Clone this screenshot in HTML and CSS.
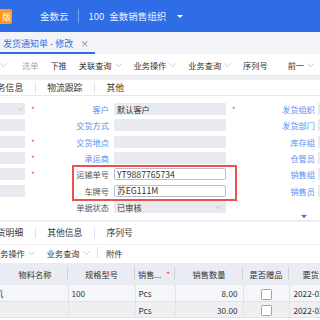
FILE: index.html
```html
<!DOCTYPE html>
<html>
<head>
<meta charset="utf-8">
<title>发货通知单 - 修改</title>
<link rel="stylesheet" href="styles.css">
</head>
<body>
<div class="topbar">
	<span class="badge">版</span>
	<span class="brand">金数云</span>
	<span class="vsep"></span>
	<span>100</span>
	<span class="org-name">金数销售组织</span>
	<span class="caret"></span>
</div>
<div class="tabstrip">
	<div class="doc-tab">发货通知单 - 修改<span class="close">×</span></div>
</div>
<div class="toolbar">
	<span class="tool"><svg class="chev" viewBox="0 0 7 4"><polyline points="0.5,0.5 3.5,3.5 6.5,0.5"/></svg></span>
	<span class="tsep"></span>
	<span class="tool disabled">选单</span>
	<span class="tool">下推</span>
	<span class="tool">关联查询<svg class="chev" viewBox="0 0 7 4"><polyline points="0.5,0.5 3.5,3.5 6.5,0.5"/></svg></span>
	<span class="tool">业务操作<svg class="chev" viewBox="0 0 7 4"><polyline points="0.5,0.5 3.5,3.5 6.5,0.5"/></svg></span>
	<span class="tool">业务查询<svg class="chev" viewBox="0 0 7 4"><polyline points="0.5,0.5 3.5,3.5 6.5,0.5"/></svg></span>
	<span class="tool">序列号</span>
	<span class="tsep"></span>
	<span class="tool">前一<svg class="chev" viewBox="0 0 7 4"><polyline points="0.5,0.5 3.5,3.5 6.5,0.5"/></svg></span>
</div>

<div class="panel">
	<div class="tabs">
		<span class="tab tab-cut">业务信息</span>
		<span class="tab-sep"></span>
		<span class="tab">物流跟踪</span>
		<span class="tab-sep"></span>
		<span class="tab">其他</span>
	</div>
	<div class="form">
		<!-- 第1行 -->
		<span class="in in-sel"><svg class="chev" viewBox="0 0 7 4"><polyline points="0.5,0.5 3.5,3.5 6.5,0.5"/></svg></span>
		<span class="req">*</span>
		<span class="lbl">客户</span>
		<span class="in">默认客户</span>
		<span class="req">*</span>
		<span class="lbl lbl-r">发货组织</span>
		<span class="in"></span>
		<!-- 第2行 -->
		<span class="in"></span>
		<span></span>
		<span class="lbl">交货方式</span>
		<span class="in"></span>
		<span></span>
		<span class="lbl lbl-r">发货部门</span>
		<span class="in"></span>
		<!-- 第3行 -->
		<span class="in"></span>
		<span class="req">*</span>
		<span class="lbl">交货地点</span>
		<span class="in"></span>
		<span></span>
		<span class="lbl lbl-r">库存组</span>
		<span class="in"></span>
		<!-- 第4行 -->
		<span class="in"></span>
		<span class="req">*</span>
		<span class="lbl">承运商</span>
		<span class="in"></span>
		<span></span>
		<span class="lbl lbl-r">仓管员</span>
		<span class="in"></span>
		<!-- 第5行 -->
		<span class="in"></span>
		<span class="req">*</span>
		<span class="lbl lbl-dark">运输单号</span>
		<span class="in in-edit">YT9887765734</span>
		<span></span>
		<span class="lbl lbl-r">销售组</span>
		<span class="in"></span>
		<!-- 第6行 -->
		<span class="in"></span>
		<span></span>
		<span class="lbl lbl-dark">车牌号</span>
		<span class="in in-edit">苏EG111M</span>
		<span></span>
		<span class="lbl lbl-r">销售员</span>
		<span class="in"></span>
		<!-- 第7行 -->
		<span></span>
		<span></span>
		<span class="lbl lbl-dark">单据状态</span>
		<span class="in in-combo">已审核<svg class="chev" viewBox="0 0 7 4"><polyline points="0.5,0.5 3.5,3.5 6.5,0.5"/></svg></span>
		<span></span>
		<span></span>
		<span></span>
		<!-- 高亮框 -->
		<div class="highlight"></div>
	</div>
	<div class="collapse"><span class="down"></span></div>
</div>

<div class="panel panel-2">
	<div class="tabs tabs-2">
		<span class="tab tab-cut">发货明细</span>
		<span class="tab-sep"></span>
		<span class="tab">其他信息</span>
		<span class="tab-sep"></span>
		<span class="tab">序列号</span>
	</div>
	<div class="subbar">
		<span class="tool tool-cut">业务操作<svg class="chev" viewBox="0 0 7 4"><polyline points="0.5,0.5 3.5,3.5 6.5,0.5"/></svg></span>
		<span class="tool">业务查询<svg class="chev" viewBox="0 0 7 4"><polyline points="0.5,0.5 3.5,3.5 6.5,0.5"/></svg></span>
		<span class="tsep"></span>
		<span class="tool">附件</span>
	</div>
	<table class="grid">
		<colgroup>
			<col class="w68"><col class="w67"><col class="w40"><col class="w68"><col class="w46"><col class="w60">
		</colgroup>
		<thead>
			<tr>
				<th>物料名称</th>
				<th>规格型号</th>
				<th class="th-left">销售...<span class="req-s">*</span></th>
				<th>销售数量</th>
				<th>是否赠品</th>
				<th>要货日期</th>
			</tr>
		</thead>
		<tbody>
			<tr class="row-sel">
				<td><span class="cut">机</span></td>
				<td>100</td>
				<td>Pcs</td>
				<td class="num">8.00</td>
				<td class="mid"><span class="cb"></span></td>
				<td>2022-03-15</td>
			</tr>
			<tr class="row-alt">
				<td></td>
				<td></td>
				<td>Pcs</td>
				<td class="num">30.00</td>
				<td class="mid"><span class="cb"></span></td>
				<td>2022-03-15</td>
			</tr>
		</tbody>
	</table>
</div>
</body>
</html>
```

FILE: styles.css
```css
* {margin:0;padding:0;box-sizing:border-box;}
body {width:320px;height:320px;overflow:hidden;background:#eef0f4;font-family:"Noto Sans CJK SC","Liberation Sans",sans-serif;font-size:8.2px;color:#333;}

/*顶部蓝条*/
.topbar {display:flex;align-items:center;height:32px;background:#2f6de6;color:#eef3ff;font-size:9.5px;white-space:nowrap;}
.badge {width:12px;height:15px;line-height:15px;background:#ff9b22;color:#fff;font-size:8.5px;text-align:right;padding-right:1px;border-radius:0 2px 2px 0;overflow:hidden;}
.brand {margin-left:28px;}
.vsep {width:1px;height:14px;background:rgba(255,255,255,.35);margin:0 10px 0 9px;}
.org-name {margin-left:5px;}
.caret {margin-left:11px;margin-top:1px;border-left:3px solid transparent;border-right:3px solid transparent;border-top:3.5px solid #fff;}

/*单据页签*/
.tabstrip {height:22px;background:#f2f4f8;display:flex;}
.doc-tab {display:flex;height:22px;padding:5px 6px 0 3px;line-height:14px;font-size:9px;color:#3470e4;border-bottom:2px solid #2f6de6;white-space:nowrap;}
.close {margin-left:7px;color:#777;}

/*工具栏*/
.toolbar {display:flex;align-items:center;height:22px;background:#fff;border-bottom:1px solid #e3e6eb;white-space:nowrap;}
.tool {display:flex;align-items:center;margin-right:12px;color:#333;}
.toolbar .tool:first-child {margin-right:7px;}
.disabled {color:#aaa;}
.tsep {width:1px;height:11px;background:#dde0e6;margin-right:8px;}
.chev {width:7px;height:4px;margin-left:3px;fill:none;stroke:#b3b9c4;stroke-width:0.8;}
.toolbar .tool:first-child .chev {margin-left:0;}

/*面板*/
.panel {background:#fff;margin-top:4px;}
.panel-2 {margin-top:1px;height:100px;}
.tabs {display:flex;align-items:center;height:16px;border-bottom:1px solid #e6e8ee;font-size:8.8px;white-space:nowrap;overflow:hidden;}
.tabs-2 {height:23px;border-bottom-color:#eef0f3;}
.tab {padding:0 11.5px;}
.tab-cut {margin-left:-23.5px;}
.tab-sep {width:1px;height:10px;background:#dde0e6;}

/*表单*/
.form {position:relative;display:grid;grid-template-columns:25px 18px 71px 112px 16px 76px 30px;grid-auto-rows:12px;row-gap:4.33px;padding-top:7px;white-space:nowrap;}
.in {display:flex;align-items:center;padding-left:3px;background:#e8eaf0;color:#333;overflow:hidden;}
.in-sel {justify-content:flex-end;padding-right:1px;}
.in-combo {justify-content:space-between;padding-right:4px;}
.in-edit {background:#fff;border:1px solid #b9bec8;border-radius:2px;padding-left:2px;font-size:8.7px;}
.req {color:#f04a3e;padding-left:6px;line-height:14px;font-size:8px;}
.lbl {text-align:right;padding-right:5px;line-height:12px;color:#5a8ef0;}
.lbl-r {padding-right:3px;}
.lbl-dark {color:#555;}
.highlight {position:absolute;left:72px;top:69px;width:165px;height:36px;border:2px solid #ee5050;}
.collapse {height:8px;display:flex;justify-content:flex-end;align-items:center;padding-right:13px;border-bottom:1px solid #e8eaef;}
.down {border-left:3px solid transparent;border-right:3px solid transparent;border-top:3px solid #2f6de6;}

/*分录*/
.subbar {display:flex;align-items:center;height:16px;white-space:nowrap;}
.tool-cut {margin-left:-8px;}
.subbar .tsep {margin-left:-4.5px;}
.grid {width:349px;table-layout:fixed;border-collapse:collapse;margin-top:2px;white-space:nowrap;}
.w68 {width:68px;}
.w67 {width:67px;}
.w40 {width:40px;}
.w46 {width:46px;}
.w60 {width:60px;}
.grid th {height:22px;font-weight:normal;text-align:center;overflow:hidden;background:#e9ecf3 linear-gradient(#cdd2db,#cdd2db) right center / 1px 13px no-repeat;}
.grid th:first-child {padding-left:2px;}
.grid .th-left {text-align:left;padding-left:3px;}
.req-s {color:#f04a3e;margin-left:5px;}
.grid td {height:16.5px;padding:0 3px;overflow:hidden;border-right:1px solid #e0e3e8;border-bottom:1px solid #e0e3e8;}
.grid td:last-child {padding-left:4px;}
.row-sel td {background:#f4f6fa;}
.row-alt td {background:#efeff1;}
.num {text-align:right;padding-right:5px !important;}
.mid {text-align:center;}
.cut {display:inline-block;margin-left:-8px;}
.cb {display:inline-block;width:11px;height:11px;vertical-align:middle;background:#fff;border:1px solid #9ea4ae;border-radius:1.5px;}
```
